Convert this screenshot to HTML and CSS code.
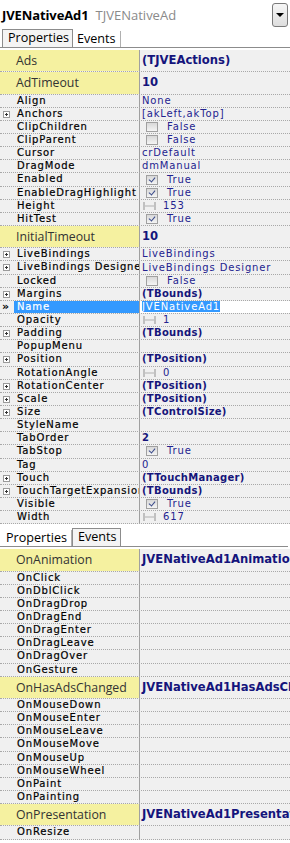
FILE: index.html
```html
<!DOCTYPE html>
<html lang="en">
<head>
    <meta charset="UTF-8">
    <title>Object Inspector</title>
    <link rel="stylesheet" href="styles.css">
</head>
<body>
    <div class="header">
        <span class="comp-name">JVENativeAd1</span>
        <span class="comp-class">TJVENativeAd</span>
        <span class="drop-btn"><span class="arrow"></span></span>
    </div>

    <div class="tabs">
        <span class="tab active">Properties</span>
        <span class="tab">Events</span>
    </div>

    <div class="grid">
        <div class="row big"><div class="name">Ads</div><div class="val bold">(TJVEActions)</div></div>
        <div class="row big"><div class="name">AdTimeout</div><div class="val bold">10</div></div>
        <div class="row"><div class="name">Align</div><div class="val">None</div></div>
        <div class="row"><div class="name"><span class="exp"></span>Anchors</div><div class="val">[akLeft,akTop]</div></div>
        <div class="row"><div class="name">ClipChildren</div><div class="val"><span class="chk"></span>False</div></div>
        <div class="row"><div class="name">ClipParent</div><div class="val"><span class="chk"></span>False</div></div>
        <div class="row"><div class="name">Cursor</div><div class="val">crDefault</div></div>
        <div class="row"><div class="name">DragMode</div><div class="val">dmManual</div></div>
        <div class="row"><div class="name">Enabled</div><div class="val"><span class="chk on"></span>True</div></div>
        <div class="row"><div class="name">EnableDragHighlight</div><div class="val"><span class="chk on"></span>True</div></div>
        <div class="row"><div class="name">Height</div><div class="val"><span class="slider"></span>153</div></div>
        <div class="row"><div class="name">HitTest</div><div class="val"><span class="chk on"></span>True</div></div>
        <div class="row big"><div class="name">InitialTimeout</div><div class="val bold">10</div></div>
        <div class="row"><div class="name"><span class="exp"></span>LiveBindings</div><div class="val">LiveBindings</div></div>
        <div class="row"><div class="name"><span class="exp"></span>LiveBindings Designer</div><div class="val">LiveBindings Designer</div></div>
        <div class="row"><div class="name">Locked</div><div class="val"><span class="chk"></span>False</div></div>
        <div class="row"><div class="name"><span class="exp"></span>Margins</div><div class="val bold">(TBounds)</div></div>
        <div class="row selected"><span class="marker">&raquo;</span><div class="name">Name</div><div class="val"><span class="sel-text">JVENativeAd1</span></div></div>
        <div class="row"><div class="name">Opacity</div><div class="val"><span class="slider"></span>1</div></div>
        <div class="row"><div class="name"><span class="exp"></span>Padding</div><div class="val bold">(TBounds)</div></div>
        <div class="row"><div class="name">PopupMenu</div><div class="val"></div></div>
        <div class="row"><div class="name"><span class="exp"></span>Position</div><div class="val bold">(TPosition)</div></div>
        <div class="row"><div class="name">RotationAngle</div><div class="val"><span class="slider"></span>0</div></div>
        <div class="row"><div class="name"><span class="exp"></span>RotationCenter</div><div class="val bold">(TPosition)</div></div>
        <div class="row"><div class="name"><span class="exp"></span>Scale</div><div class="val bold">(TPosition)</div></div>
        <div class="row"><div class="name"><span class="exp"></span>Size</div><div class="val bold">(TControlSize)</div></div>
        <div class="row"><div class="name">StyleName</div><div class="val"></div></div>
        <div class="row"><div class="name">TabOrder</div><div class="val bold">2</div></div>
        <div class="row"><div class="name">TabStop</div><div class="val"><span class="chk on"></span>True</div></div>
        <div class="row"><div class="name">Tag</div><div class="val">0</div></div>
        <div class="row"><div class="name"><span class="exp"></span>Touch</div><div class="val bold">(TTouchManager)</div></div>
        <div class="row"><div class="name"><span class="exp"></span>TouchTargetExpansion</div><div class="val bold">(TBounds)</div></div>
        <div class="row"><div class="name">Visible</div><div class="val"><span class="chk on"></span>True</div></div>
        <div class="row"><div class="name">Width</div><div class="val"><span class="slider"></span>617</div></div>
    </div>

    <div class="tabs second">
        <span class="tab">Properties</span>
        <span class="tab active">Events</span>
    </div>

    <div class="grid">
        <div class="row big"><div class="name">OnAnimation</div><div class="val bold">JVENativeAd1Animation</div></div>
        <div class="row"><div class="name">OnClick</div><div class="val"></div></div>
        <div class="row"><div class="name">OnDblClick</div><div class="val"></div></div>
        <div class="row"><div class="name">OnDragDrop</div><div class="val"></div></div>
        <div class="row"><div class="name">OnDragEnd</div><div class="val"></div></div>
        <div class="row"><div class="name">OnDragEnter</div><div class="val"></div></div>
        <div class="row"><div class="name">OnDragLeave</div><div class="val"></div></div>
        <div class="row"><div class="name">OnDragOver</div><div class="val"></div></div>
        <div class="row"><div class="name">OnGesture</div><div class="val"></div></div>
        <div class="row big"><div class="name">OnHasAdsChanged</div><div class="val bold">JVENativeAd1HasAdsChanged</div></div>
        <div class="row"><div class="name">OnMouseDown</div><div class="val"></div></div>
        <div class="row"><div class="name">OnMouseEnter</div><div class="val"></div></div>
        <div class="row"><div class="name">OnMouseLeave</div><div class="val"></div></div>
        <div class="row"><div class="name">OnMouseMove</div><div class="val"></div></div>
        <div class="row"><div class="name">OnMouseUp</div><div class="val"></div></div>
        <div class="row"><div class="name">OnMouseWheel</div><div class="val"></div></div>
        <div class="row"><div class="name">OnPaint</div><div class="val"></div></div>
        <div class="row"><div class="name">OnPainting</div><div class="val"></div></div>
        <div class="row big"><div class="name">OnPresentation</div><div class="val bold">JVENativeAd1Presentation</div></div>
        <div class="row"><div class="name">OnResize</div><div class="val"></div></div>
    </div>
</body>
</html>
```

FILE: styles.css
```css
body {
    margin: 0;
    width: 290px;
    height: 843px;
    overflow: hidden;
    background: #fff;
    font-family: "DejaVu Sans", Verdana, sans-serif;
}

/* top header with component name */
.header {
    height: 29px;
    display: flex;
    align-items: center;
    padding-left: 2px;
    font-family: "Open Sans", "Noto Sans", sans-serif;
}

.comp-name {
    font-size: 13px;
    font-weight: bold;
    color: #000;
    letter-spacing: -0.1px;
}

.comp-class {
    font-size: 13px;
    color: #8a8a8a;
    margin-left: 7px;
}

.drop-btn {
    margin-left: auto;
    margin-right: 2px;
    width: 14px;
    height: 22px;
    border: 1px solid #7a7a7a;
    border-radius: 3px;
    background: linear-gradient(#f6f6f6, #dedede);
    display: flex;
    align-items: center;
    justify-content: center;
}

.arrow {
    width: 0;
    height: 0;
    border-left: 4px solid transparent;
    border-right: 4px solid transparent;
    border-top: 4px solid #000;
}

/* tab strip */
.tabs {
    height: 18px;
    display: flex;
    align-items: flex-end;
    padding-left: 2px;
    border-bottom: 1px solid #8c8c8c;
    font-family: "Open Sans", "Noto Sans", sans-serif;
    font-size: 12.6px;
}

.tab {
    height: 16px;
    line-height: 16px;
    padding: 0 4px;
    color: #000;
    border-right: 1px solid #b0b0b0;
}

.tab.active {
    height: 17px;
    background: #f4f4f4;
    border: 1px solid #8c8c8c;
    border-bottom: none;
    padding: 0 3px 0 5px;
}

.second {
    margin-top: 4px;
    margin-right: 2px;
}

/* property grid */
.grid {
    margin-top: 2px;
    background: #f0f0f0;
}

.row {
    position: relative;
    display: grid;
    grid-template-columns: 140px 1fr;
    height: 13.15px;
    box-sizing: border-box;
    border-bottom: 1px dotted #a8a8a8;
    font-size: 10px;
    letter-spacing: 0.85px;
    line-height: 12px;
    white-space: nowrap;
    overflow: hidden;
}

.name {
    position: relative;
    padding-left: 17px;
    color: #000;
    border-right: 1px solid #a0a0a0;
    overflow: hidden;
    -webkit-text-stroke: 0.2px #000;
}

.val {
    padding-left: 2px;
    color: #23238f;
    display: flex;
    align-items: center;
    overflow: hidden;
}

.val.bold {
    font-weight: bold;
    color: #15157a;
    letter-spacing: 0.3px;
}

.row.big {
    height: 22.3px;
    line-height: 21px;
}

.row.big .name {
    background: #f5f1a0;
    padding-left: 16px;
    font-family: "Open Sans", "Noto Sans", sans-serif;
    font-size: 12.3px;
    letter-spacing: 0;
    color: #333;
    -webkit-text-stroke: 0;
}

.row.big .val.bold {
    font-size: 11.6px;
    letter-spacing: 0;
    color: #14147c;
}

/* expand box */
.exp {
    position: absolute;
    left: 3px;
    top: 3px;
    width: 5px;
    height: 5px;
    border: 1px solid #9a9a9a;
    background: #fff;
}

.exp::before {
    content: "";
    position: absolute;
    left: 1px;
    top: 2px;
    width: 3px;
    height: 1px;
    background: #333;
}

.exp::after {
    content: "";
    position: absolute;
    left: 2px;
    top: 1px;
    width: 1px;
    height: 3px;
    background: #333;
}

/* checkbox */
.chk {
    position: relative;
    width: 10px;
    height: 8px;
    margin: 0 9px 0 4px;
    border: 1px solid #a0a0a0;
    background: linear-gradient(#d8d8d8, #f4f4f4);
    flex: none;
}

.chk.on::after {
    content: "";
    position: absolute;
    left: 3px;
    top: 0;
    width: 3px;
    height: 5px;
    border-right: 1.5px solid #3a4a8a;
    border-bottom: 1.5px solid #3a4a8a;
    transform: rotate(40deg);
}

/* slider grip */
.slider {
    position: relative;
    width: 9px;
    height: 8px;
    margin: 0 7px 0 1px;
    border-left: 2px solid #c0c0c0;
    border-right: 2px solid #c0c0c0;
    flex: none;
}

.slider::after {
    content: "";
    position: absolute;
    left: 0;
    right: 0;
    top: 3px;
    height: 2px;
    background: #d0d0d0;
}

/* selected row */
.row.selected {
    grid-template-columns: 14px 126px 1fr;
}

.row.selected .name {
    background: #3399ff;
    color: #fff;
    padding-left: 3px;
    -webkit-text-stroke: 0.2px #fff;
}

.row.selected .val {
    background: #fff;
}

.sel-text {
    background: #3399ff;
    color: #fff;
    line-height: 11px;
}

.marker {
    padding-left: 2px;
    font-size: 11px;
    line-height: 12px;
    color: #000;
    font-weight: bold;
    letter-spacing: 0;
}
```
